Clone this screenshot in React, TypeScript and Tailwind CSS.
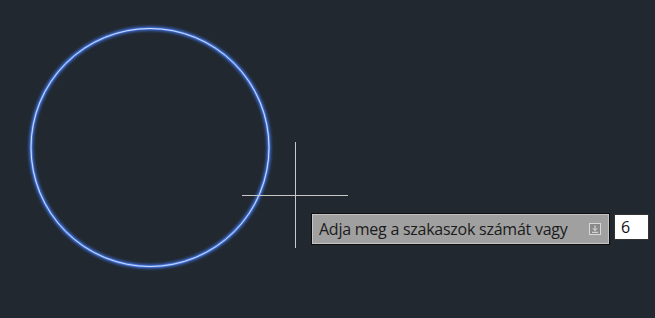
export default function App() {
  return (
    <div className="relative w-[655px] h-[318px] overflow-hidden bg-[#212830]">
      {/* drawing canvas */}
      <svg className="absolute inset-0" width="655" height="318" viewBox="0 0 655 318">
        <defs>
          <filter id="glow" x="-20%" y="-20%" width="140%" height="140%">
            <feGaussianBlur stdDeviation="1.6" />
          </filter>
        </defs>
        <circle cx="150" cy="147.5" r="119" fill="none" stroke="#3d6fd8" strokeWidth="4" filter="url(#glow)" />
        <circle cx="150" cy="147.5" r="119" fill="none" stroke="#4f7fe6" strokeWidth="2.2" />
        <circle cx="150" cy="147.5" r="119" fill="none" stroke="#dce6ff" strokeWidth="0.9" />
        <line x1="295.5" y1="142" x2="295.5" y2="248" stroke="#c8c8c8" strokeWidth="1" />
        <line x1="242" y1="195.5" x2="348" y2="195.5" stroke="#c8c8c8" strokeWidth="1" />
      </svg>

      {/* dynamic input tooltip */}
      <div className="absolute left-[311px] top-[213px] flex items-start gap-[4px]">
        <div className="flex items-center w-[299px] h-[32px] border border-[#0d0d0d] bg-[#a0a0a0] shadow-[inset_0_0_0_1px_#c4c4c4] pl-[7px] pr-[8px]">
          <span className="flex-1 text-[16px] leading-none text-[#1b1b1b] font-['Open_Sans',sans-serif] tracking-[-0.25px]">
            Adja meg a szakaszok számát vagy
          </span>
          <span className="flex items-center justify-center w-[12px] h-[12px] border border-[#d8d8d8] bg-[#8a8a8a]">
            <svg width="8" height="8" viewBox="0 0 8 8">
              <path d="M4 0.5V5.5M1.8 3.3L4 5.5L6.2 3.3M1 7.3H7" fill="none" stroke="#e4e4e4" strokeWidth="1" />
            </svg>
          </span>
        </div>
        <div className="flex items-center w-[35px] h-[26px] mt-[1px] bg-white border border-[#333] pl-[6px] text-[16px] leading-none text-[#111] font-['Open_Sans',sans-serif]">
          6
        </div>
      </div>
    </div>
  );
}
